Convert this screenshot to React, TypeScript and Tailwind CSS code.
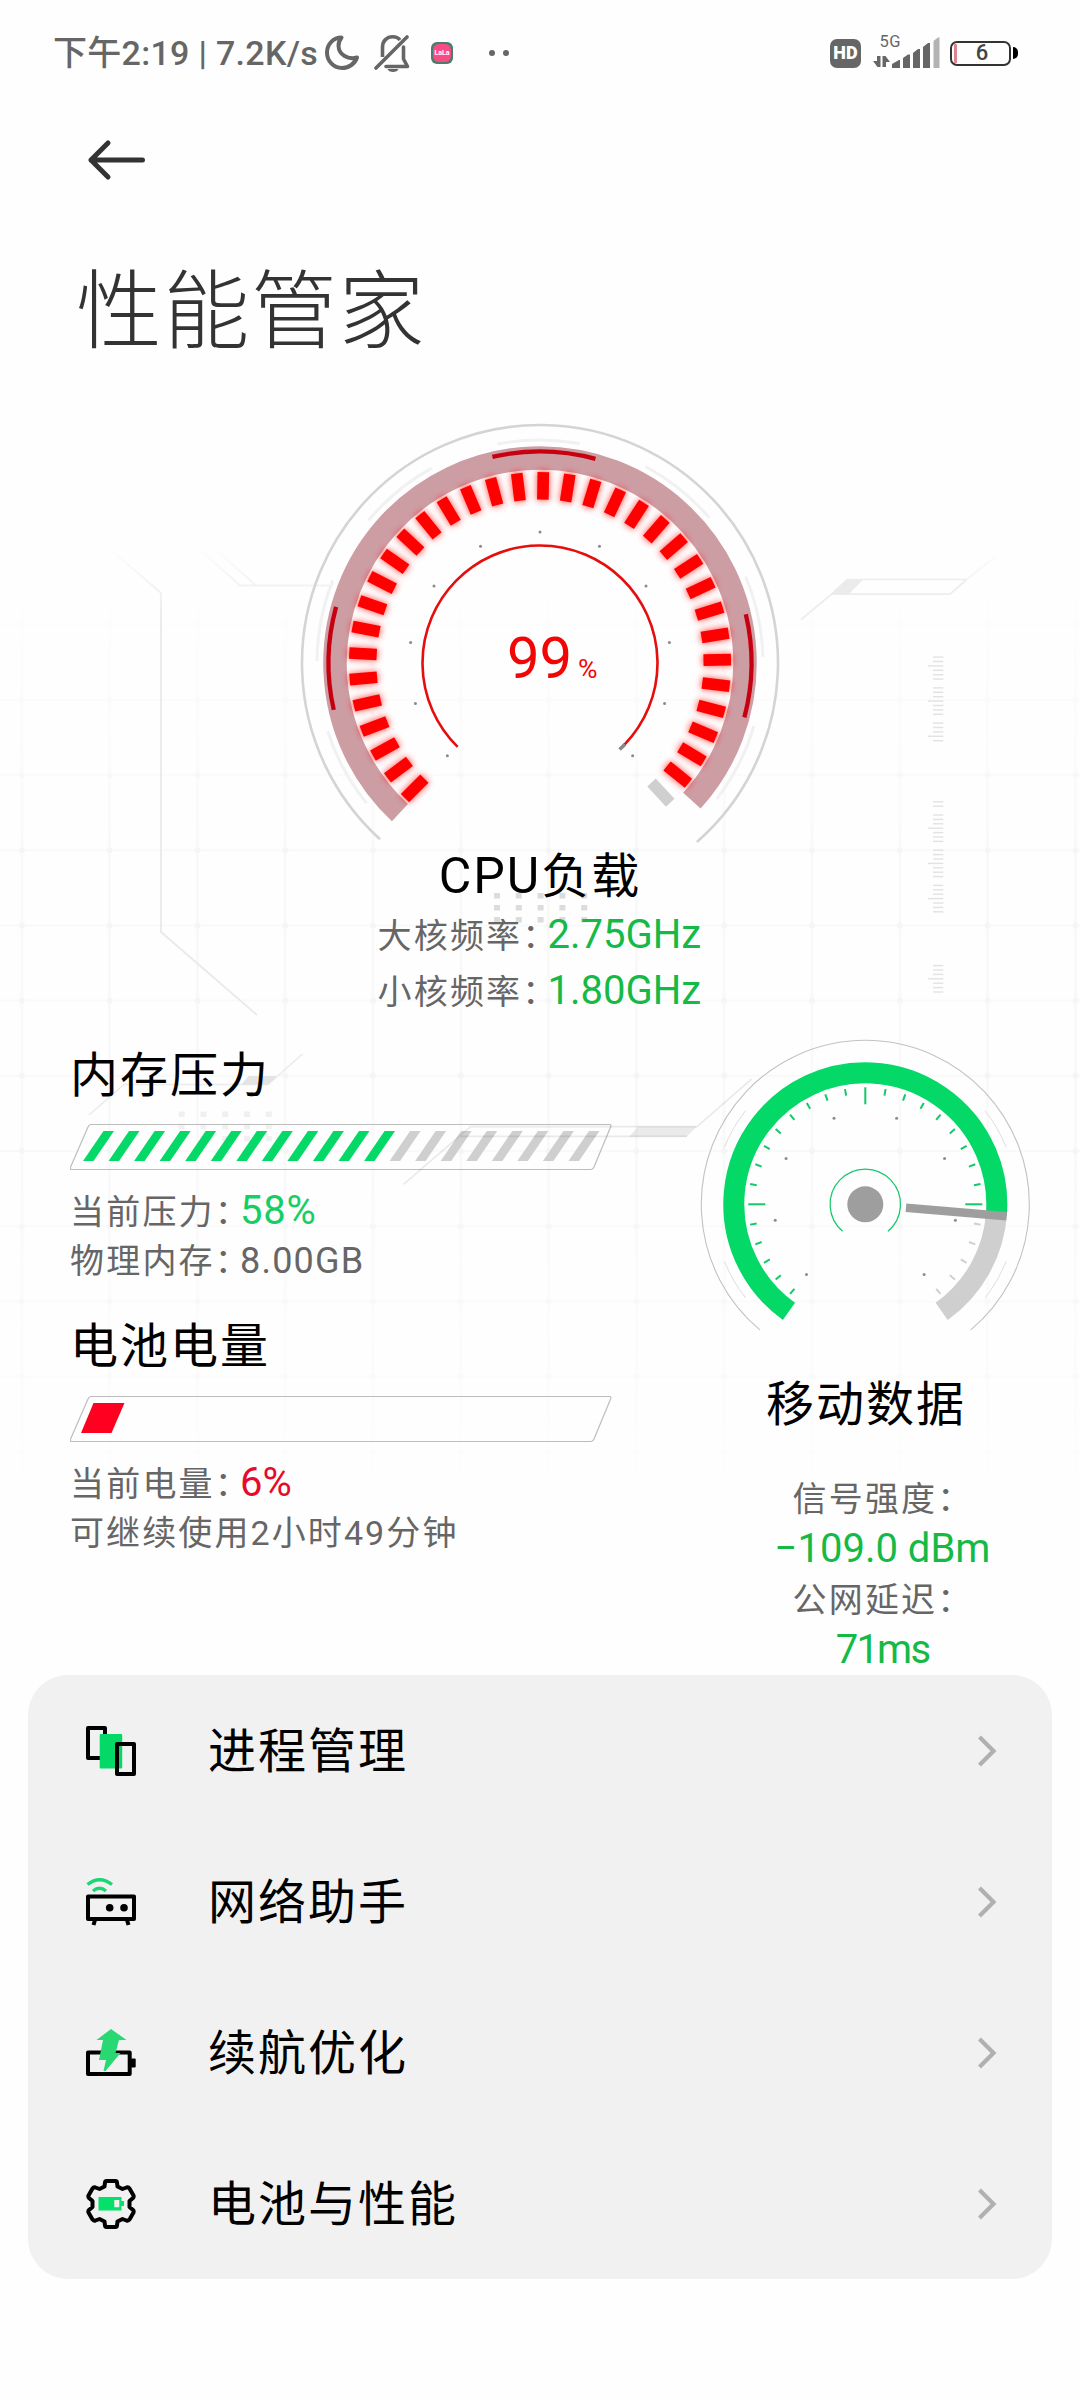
import type { ReactNode } from "react";

// Angles are measured clockwise from 12 o'clock
function polar(cx: number, cy: number, r: number, deg: number) {
  const a = (deg * Math.PI) / 180;
  return [cx + r * Math.sin(a), cy - r * Math.cos(a)];
}

function arc(cx: number, cy: number, r: number, from: number, to: number) {
  const [x1, y1] = polar(cx, cy, r, from);
  const [x2, y2] = polar(cx, cy, r, to);
  return `M${x1} ${y1}A${r} ${r} 0 ${to - from > 180 ? 1 : 0} 1 ${x2} ${y2}`;
}

function range(n: number) {
  return Array.from({ length: n }, (_, i) => i);
}

const rulers = [
  { y: 657.1, count: 20, long: 2 },
  { y: 801.8, count: 26, long: 6 },
  { y: 965.6, count: 7, long: 3 },
];

function Backdrop() {
  return (
    <svg className="pointer-events-none absolute top-0 left-0 h-[1660px] w-[1080px]" viewBox="0 0 1080 1660" fill="none">
      <defs>
        <linearGradient id="gridFade" x1="0" y1="580" x2="0" y2="1480" gradientUnits="userSpaceOnUse">
          <stop offset="0" stopColor="#fff" stopOpacity="0" />
          <stop offset="0.3" stopColor="#fff" />
          <stop offset="0.65" stopColor="#fff" />
          <stop offset="1" stopColor="#fff" stopOpacity="0.1" />
        </linearGradient>
        <linearGradient id="lineFade" x1="0" y1="545" x2="0" y2="620" gradientUnits="userSpaceOnUse">
          <stop offset="0" stopColor="#e9e9e9" stopOpacity="0" />
          <stop offset="1" stopColor="#e9e9e9" />
        </linearGradient>
        <mask id="gridMask" maskUnits="userSpaceOnUse" x="0" y="580" width="1080" height="900">
          <rect y="580" width="1080" height="900" fill="url(#gridFade)" />
        </mask>
      </defs>

      <g mask="url(#gridMask)">
        {range(13).map((i) => (
          <path key={`v${i}`} d={`M${21.8 + i * 87.8} 600V1475`} stroke="#f9f9f9" strokeWidth="3" />
        ))}
        {range(12).map((j) => (
          <path key={`h${j}`} d={`M0 ${624.6 + j * 75.2}H1080`} stroke="#f9f9f9" strokeWidth="2" />
        ))}
        {range(13).map((i) =>
          range(12).map((j) => (
            <circle key={`${i}-${j}`} cx={21.8 + i * 87.8} cy={624.6 + j * 75.2} r="3" fill="#f5f5f5" />
          ))
        )}
      </g>

      <path d="M110 549L161 593V932L257 1015" stroke="url(#lineFade)" strokeWidth="1.8" />
      <path d="M197 547L240 585.5H333M214 548L256 585.5" stroke="url(#lineFade)" strokeWidth="1.8" />

      <path d="M801 619.6L831.7 594L847 579.5H966.7M831.7 594.2H950L966.7 579.5" stroke="#ededed" strokeWidth="1.7" />
      <path d="M966.7 579.5L995.7 556" stroke="url(#lineFade)" strokeWidth="1.7" />
      <path d="M831.7 594.2L847.3 579.5H863.3L848.7 594.2Z" fill="#ebebeb" />

      {rulers.map((ruler) =>
        range(ruler.count).map((k) => {
          const phase = (((k - ruler.long) % 8) + 8) % 8;
          if (phase === 4) return null;
          const y = ruler.y + k * 4.4;
          return (
            <path key={`${ruler.y}-${k}`} d={`M${phase === 0 ? 928 : 933} ${y}H943.3`} stroke="#e2e2e2" strokeWidth="1.4" />
          );
        })
      )}

      {range(5).map((i) =>
        range(3).map((j) => (
          <g key={`d${i}-${j}`}>
            <rect x={494 + i * 21.8} y={893 + j * 12} width="6" height="5.5" fill="#dcdcdc" />
            <rect x={178.6 + i * 21.8} y={1111.5 + j * 12.2} width="6" height="5.5" fill="#f0f0f0" />
          </g>
        ))
      )}

      <path d="M89 1115L124 1084.5H268L302.5 1054" stroke="#ebebeb" strokeWidth="1.6" />
      <path d="M241 1085L248.5 1076H276.5L268.5 1085Z" fill="#e4e4e4" />
    </svg>
  );
}

// Trace that runs over the memory bar and up to the data gauge
function Trace() {
  return (
    <svg className="pointer-events-none absolute top-[1070px] left-[390px] h-[124px] w-[370px]" viewBox="390 1070 370 124" fill="none">
      <path d="M403.5 1184.3L470.5 1126.7H697L751.7 1079M459 1136.3H687" stroke="#000" strokeOpacity="0.08" strokeWidth="1.7" />
      <path d="M629 1136.8L638 1126.5H697L686.7 1136.8Z" fill="#000" fillOpacity="0.08" />
    </svg>
  );
}

function StatusBar() {
  return (
    <div className="flex h-[106px] items-center pr-[62px] pl-[53px] text-[#666]">
      <span className="w-[271px] text-[34px] leading-[50px] font-medium tracking-[0.3px] whitespace-nowrap">下午2:19 | 7.2K/s</span>
      <svg className="h-[38px] w-[36px]" viewBox="0 0 36 38" fill="none">
        <path
          d="M17.5 3.6C9.5 3.6 3 10 3 18.5S9.5 34 18 34C25 34 31 29.5 33 23.5C24 26 15 21 14.5 12C14.4 8.5 15.5 6 17.5 3.6Z"
          stroke="#666" strokeWidth="4" strokeLinejoin="round"
        />
      </svg>
      <svg className="ml-[14px] h-[40px] w-[38px]" viewBox="0 0 38 40" fill="none" stroke="#666" strokeWidth="3.6">
        <path d="M2 35L33 4M12 33.5H33.5L29.5 26V14" strokeLinecap="round" strokeLinejoin="round" />
        <path d="M8.5 24V14C8.5 8 13 3.8 18.5 3.8C22 3.8 24.5 5 26 7" />
        <path d="M13.5 36H24.500C23.5 40 14.5 40 13.5 36Z" fill="#666" stroke="none" />
      </svg>
      <span className="ml-[19px] flex size-[22px] items-center justify-center rounded-[6px] bg-[#4d7d6a]">
        <span className="flex size-[18px] items-center justify-center rounded-[6px] bg-[#fa4b89] text-[7px] leading-none font-bold text-white">
          LaLa
        </span>
      </span>
      <span className="ml-[36px] size-[6px] rounded-full bg-[#666]" />
      <span className="ml-[8px] size-[6px] rounded-full bg-[#666]" />

      <span className="ml-auto flex h-[29px] w-[31px] items-center justify-center rounded-[7px] bg-[#666] text-[18px] leading-none font-black text-white">
        HD
      </span>
      <svg className="ml-[11px] h-[50px] w-[68px]" viewBox="872 28 68 50">
        <text x="879.5" y="47" fontSize="16.5" fill="#666" textLength="21">5G</text>
        <path d="M880.5 56V67H877.5L873 61H877V56ZM882.5 67V56H885.5L890 62H886V67Z" fill="#666" />
        <path d="M892 68V64L899 60H900V68ZM903 68V58L908 54.5H910V68ZM913 68V53L918 49H920V68ZM923 68V47L928 43H930V68Z" fill="#666" />
        <path d="M933.5 68V41L938 37.5H939.5V68Z" fill="#b3b3b3" />
      </svg>
      <span className="ml-[10px] flex h-[25px] w-[61px] items-center rounded-[7px] border-2 border-[#333] pl-[2px]">
        <span className="h-[19px] w-[3px] rounded-[1px] bg-[#dc8591]" />
        <span className="flex-1 pr-[2px] text-center text-[22px] leading-none font-medium text-[#444]">6</span>
      </span>
      <span className="ml-[2px] h-[12px] w-[5px] rounded-r-full bg-black" />
    </div>
  );
}

const CX = 540;
const CY = 663;

function CpuGauge({ load }: { load: number }) {
  const lit = Math.floor((load / 100) * 35);
  return (
    <svg className="mx-auto mt-[42px] block h-[435px] w-[500px]" viewBox="290 415 500 435" fill="none">
      <defs>
        <filter id="glow" x="-20%" y="-20%" width="140%" height="140%">
          <feGaussianBlur stdDeviation="3.5" />
        </filter>
      </defs>
      <path d={arc(CX, CY, 238, -137.5, 138.5)} stroke="#d4d4d4" strokeWidth="2.6" strokeLinecap="round" />
      {[-129, -89.5, -50.3, -11, 28.2, 67.2, 106.4].map((a) => (
        <path key={a} d={arc(CX, CY, 223, a, a + 21.2)} stroke="#f1f1f1" strokeWidth="3" />
      ))}
      <path d={arc(CX, CY, 205, -136.9, 132.2)} stroke="#cd9da4" strokeWidth="23.5" />
      {[-102.8, -13, 76.7].map((a) => (
        <path key={a} d={arc(CX, CY, 211.5, a, a + 28.2)} stroke="#c7000f" strokeWidth="4.3" />
      ))}
      <g filter="url(#glow)" opacity="0.7">
        {range(lit).map((i) => (
          <rect key={i} x={CX - 6} y={CY - 192} width="12" height="29" fill="#f00" transform={`rotate(${-135 + i * 8} ${CX} ${CY})`} />
        ))}
      </g>
      {range(35).map((i) => (
        <rect
          key={i}
          x={CX - 5.8}
          y={CY - 191}
          width="11.6"
          height="27.5"
          fill={i < lit ? "#f00" : "#cfcfcf"}
          transform={`rotate(${-135 + i * 8} ${CX} ${CY})`}
        />
      ))}
      {range(11).map((i) => {
        const [x, y] = polar(CX, CY, 131, -135 + i * 27);
        return <circle key={i} cx={x} cy={y} r="1.5" fill="#8a8a8a" />;
      })}
      <path d={arc(CX, CY, 117.5, -135.5, 134)} stroke="#e60d0d" strokeWidth="2.6" />
      <path d={arc(CX, CY, 117.5, 133.7, 137.4)} stroke="#888" strokeWidth="3.6" />
      <text x="507" y="677.5" fontSize="58" fill="#f20505">{load}</text>
      <text x="578" y="677.5" fontSize="25" fill="#f20505" textLength="19.5" lengthAdjust="spacingAndGlyphs">%</text>
    </svg>
  );
}

const MX = 865.3;
const MY = 1204.3;

function SignalGauge() {
  return (
    <svg className="mt-[17px] h-[300px] w-[332px]" viewBox="699 1036 332 300" fill="none">
      <path d={arc(MX, MY, 164, -140, 140)} stroke="#c2c2c2" strokeWidth="1.1" />
      {[-128, -68, 52, 112].map((a) => (
        <path key={a} d={arc(MX, MY, 152, a, a + 16)} stroke="#dedede" strokeWidth="1" />
      ))}
      <path d={arc(MX, MY, 131.5, 94, 144.5)} stroke="#cfcfcf" strokeWidth="21" />
      <path d={arc(MX, MY, 131.5, -144.5, 94.5)} stroke="#04d967" strokeWidth="21" />
      {range(29).map((i) => {
        const a = -140 + i * 10;
        const long = a % 90 === 0;
        const [x1, y1] = polar(MX, MY, 117, a);
        const [x2, y2] = polar(MX, MY, long ? 100 : 110.3, a);
        return (
          <path key={a} d={`M${x1} ${y1}L${x2} ${y2}`} stroke={a > 95 ? "#cfcfcf" : "#12c869"} strokeWidth="2" />
        );
      })}
      {[-140, -100, -60, -20, 20, 60, 100, 140].map((a) => {
        const [x, y] = polar(MX, MY, 91.5, a);
        return <circle key={a} cx={x} cy={y} r="1.5" fill="#8c8c8c" />;
      })}
      <path d={arc(MX, MY, 35.2, -140, 140)} stroke="#12c869" strokeWidth="1.2" />
      <circle cx={MX} cy={MY} r="18" fill="#9e9e9e" />
      <rect x={MX - 4.3} y={MY - 141.8} width="8.6" height="101" fill="#9e9e9e" transform={`rotate(94.8 ${MX} ${MY})`} />
    </svg>
  );
}

function BarFrame({ children }: { children: ReactNode }) {
  return (
    <svg className="block h-[48px] w-[544px]" viewBox="0 0 544 48" fill="none">
      <path
        d="M21 1.5H539.500Q541.5 1.5 540.800 3.5L524 44Q523 46.5 521 46.5H2Q-0.5 46.5 0.8 43.5L18 4Q19 1.5 21 1.5Z"
        stroke="#bdbdbd" strokeWidth="1.2"
      />
      {children}
    </svg>
  );
}

function Heading({ children }: { children: ReactNode }) {
  return <h2 className="h-[50px] text-[48px] leading-[50px] tracking-[2px] whitespace-nowrap text-black">{children}</h2>;
}

// The colon uses its half-width form
function Label({ children }: { children: ReactNode }) {
  return (
    <span className="text-[34px] tracking-[2.2px]">
      {children}
      <span className="mr-[6px] [font-feature-settings:'halt']">：</span>
    </span>
  );
}

function ProcessIcon() {
  return (
    <svg className="size-[50px]" viewBox="0 0 50 50" fill="none">
      <rect x="2" y="2" width="17" height="30" stroke="#000" strokeWidth="4" strokeLinejoin="round" />
      <rect x="13.7" y="8" width="22.5" height="34.5" rx="1" fill="#04d967" />
      <rect x="31" y="18" width="17" height="30" stroke="#000" strokeWidth="4" strokeLinejoin="round" />
    </svg>
  );
}

function RouterIcon() {
  return (
    <svg className="size-[50px]" viewBox="0 0 50 50" fill="none">
      <path d="M1.5 7.5Q13.5 -2 26 7.5M7 14Q13.5 8.5 20 14" stroke="#1ad673" strokeWidth="3.4" />
      <rect x="2" y="19.5" width="46" height="22.5" stroke="#000" strokeWidth="4" strokeLinejoin="round" />
      <circle cx="23.7" cy="30.7" r="3.8" fill="#000" />
      <circle cx="38" cy="30.7" r="3.8" fill="#000" />
      <path d="M9 43L7.5 48M41 43L42.5 48" stroke="#000" strokeWidth="4" />
    </svg>
  );
}

function BoostIcon() {
  return (
    <svg className="size-[50px]" viewBox="0 0 50 50" fill="none">
      <rect x="2" y="24.5" width="41.7" height="21.5" stroke="#000" strokeWidth="4" strokeLinejoin="round" />
      <rect x="45" y="30.5" width="4.7" height="9" rx="1" fill="#000" />
      <path d="M25 1L40.5 12H33L29.5 25H34.5L19.5 43H17.5L20 32H13L17 12H10.5Z" fill="#27d873" />
    </svg>
  );
}

function GearIcon() {
  return (
    <svg className="size-[50px]" viewBox="0 0 50 50" fill="none">
      <path
        d="M20.5 2H29.5Q30.8 2 31 3.5L31.5 7.5L36.5 10L40.5 8.5Q42.5 8 43.5 9.5L47.5 16.5Q48 18 47 19L43.5 22V28L47 31Q48 32 47.5 33.5L43.5 40.5Q42.5 42 40.5 41.5L36.5 40L31.5 42.5L31 46.5Q30.8 48 29.5 48H20.5Q19.2 48 19 46.5L18.5 42.5L13.5 40L9.5 41.5Q7.5 42 6.5 40.5L2.5 33.5Q2 32 3 31L6.5 28V22L3 19Q2 18 2.5 16.5L6.5 9.5Q7.5 8 9.5 8.5L13.5 10L18.5 7.5L19 3.5Q19.2 2 20.5 2Z"
        stroke="#000" strokeWidth="4" strokeLinejoin="round"
      />
      <path d="M12.5 18H35.5V22H38V27H35.5V31.5H12.5ZM28.3 21V28.3H33.3V21Z" fill="#04e06a" fillRule="evenodd" />
    </svg>
  );
}

const menu = [
  { label: "进程管理", icon: <ProcessIcon /> },
  { label: "网络助手", icon: <RouterIcon /> },
  { label: "续航优化", icon: <BoostIcon /> },
  { label: "电池与性能", icon: <GearIcon /> },
];

export default function App() {
  return (
    <div className="relative h-[2400px] w-[1080px] overflow-hidden bg-[#fefefe] font-[Roboto,'Noto_Sans_CJK_SC',sans-serif]">
      <Backdrop />
      <div className="relative">
        <StatusBar />

        <div className="flex h-[108px] items-center pl-[86px]">
          <svg className="h-[44px] w-[62px]" viewBox="0 0 62 44" fill="none" stroke="#333" strokeWidth="5" strokeLinecap="round" strokeLinejoin="round">
            <path d="M56.5 22H5M22 5L5 22L22 39" />
          </svg>
        </div>
        <h1 className="mt-[39px] h-[120px] pl-[76px] text-[86px] leading-[120px] font-light tracking-[1.5px] text-[#333]">性能管家</h1>

        <CpuGauge load={99} />
        <div className="flex flex-col items-center">
          <h2 className="h-[50px] text-[48px] leading-[52px] tracking-[2px] whitespace-nowrap text-black">
            <span className="text-[50px]">CPU</span>负载
          </h2>
          <div className="mt-[7px] w-[325px] text-[40px] leading-[56px] whitespace-nowrap text-[#14ba45]">
            <p className="h-[56px]"><span className="text-[#666]"><Label>大核频率</Label></span>2.75GHz</p>
            <p className="h-[56px]"><span className="text-[#666]"><Label>小核频率</Label></span>1.80GHz</p>
          </div>
        </div>

        <div className="flex h-[656px] items-start pl-[70px]">
          <div className="w-[542px] pt-[32px] text-[36px] leading-[50px] text-[#666]">
            <Heading>内存压力</Heading>
            <div className="mt-[22px]">
              <BarFrame>
                {range(20).map((i) => (
                  <path
                    key={i}
                    d="M13 38L33.5 8H44L23.5 38Z"
                    fill={i < 12 ? "#04d967" : "#cfcfcf"}
                    transform={`translate(${i * 25.55} 0)`}
                  />
                ))}
              </BarFrame>
            </div>
            <p className="mt-[15px] h-[50px]"><Label>当前压力</Label><span className="text-[40px] tracking-[0.8px] text-[#14cf66]">58%</span></p>
            <p className="h-[50px]"><Label>物理内存</Label><span className="tracking-[1.2px]">8.00GB</span></p>

            <div className="mt-[36px]">
              <Heading>电池电量</Heading>
            </div>
            <div className="mt-[23px]">
              <BarFrame>
                <path d="M11 38L23.5 8H54.5L41.5 38Z" fill="#ff0020" />
              </BarFrame>
            </div>
            <p className="mt-[15px] h-[50px]"><Label>当前电量</Label><span className="text-[40px] text-[#e80a2c]">6%</span></p>
            <p className="h-[50px] text-[34px] tracking-[2.1px]">可继续使用2小时49分钟</p>
          </div>

          <div className="ml-[87px] flex w-[332px] flex-col items-center">
            <SignalGauge />
            <div className="mt-[44px] ml-[2px]">
              <Heading>移动数据</Heading>
            </div>
            <div className="mt-[43px] ml-[35px] text-center text-[40px] leading-[50px] whitespace-nowrap text-[#14ba45]">
              <p className="h-[51px] pr-[10px] text-[#666]"><Label>信号强度</Label></p>
              <p className="h-[50px]">−109.0 dBm</p>
              <p className="h-[51px] pr-[10px] text-[#666]"><Label>公网延迟</Label></p>
              <p className="h-[50px] tracking-[-1.8px]">71ms</p>
            </div>
          </div>
        </div>

        <nav className="mx-[28px] h-[604px] rounded-[40px] bg-[#f1f1f1]">
          {menu.map((item) => (
            <a key={item.label} className="flex h-[151px] items-center pr-[55px] pl-[58px]">
              {item.icon}
              <span className="ml-[72px] pt-[3px] text-[48px] leading-[60px] tracking-[2px] text-black">{item.label}</span>
              <svg className="ml-auto h-[34px] w-[20px]" viewBox="0 0 20 34" fill="none" stroke="#b0b0b0" strokeWidth="4.2">
                <path d="M2.5 3L16.5 17L2.5 31" />
              </svg>
            </a>
          ))}
        </nav>
      </div>
      <Trace />
    </div>
  );
}
